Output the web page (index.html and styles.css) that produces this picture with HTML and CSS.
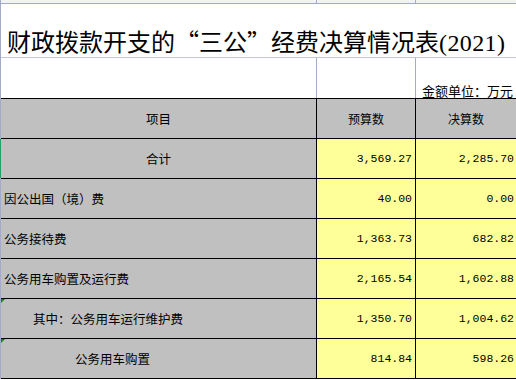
FILE: index.html
```html
<!DOCTYPE html>
<html lang="zh-CN">
<head>
<meta charset="utf-8">
<title>财政拨款开支的“三公”经费决算情况表(2021)</title>
<link rel="stylesheet" href="styles.css">
</head>
<body>
<div class="sheet">
  <div class="row top">
    <div class="c c1"></div><div class="c c2"></div><div class="c c3"></div>
  </div>
  <div class="row title">
    <div class="title-text">财政拨款开支的<span class="q ql">“</span>三公<span class="q">”</span>经费决算情况表<span class="yr">(2021)</span></div>
  </div>
  <div class="row unit">
    <div class="c c1"></div><div class="c c2"></div><div class="c c3 unit-text">金额单位：万元</div>
  </div>
  <div class="table">
    <div class="tr head">
      <div class="td name center">项目</div>
      <div class="td center">预算数</div>
      <div class="td center">决算数</div>
    </div>
    <div class="tr">
      <div class="td name center sel">合计</div>
      <div class="td num">3,569.27</div>
      <div class="td num">2,285.70</div>
    </div>
    <div class="tr">
      <div class="td name">因公出国（境）费</div>
      <div class="td num">40.00</div>
      <div class="td num">0.00</div>
    </div>
    <div class="tr">
      <div class="td name">公务接待费</div>
      <div class="td num">1,363.73</div>
      <div class="td num">682.82</div>
    </div>
    <div class="tr">
      <div class="td name">公务用车购置及运行费</div>
      <div class="td num">2,165.54</div>
      <div class="td num">1,602.88</div>
    </div>
    <div class="tr">
      <div class="td name ind1 flag">其中：公务用车运行维护费</div>
      <div class="td num">1,350.70</div>
      <div class="td num">1,004.62</div>
    </div>
    <div class="tr">
      <div class="td name ind2 flag">公务用车购置</div>
      <div class="td num">814.84</div>
      <div class="td num">598.26</div>
    </div>
  </div>
</div>
</body>
</html>
```

FILE: styles.css
```css
html, body {
  margin: 0;
  padding: 0;
  background: #ffffff;
}
body {
  width: 516px;
  height: 380px;
  overflow: hidden;
  font-family: "Noto Sans CJK SC", sans-serif;
  color: #000;
}
.sheet {
  border-left: 1px solid #a4abc9;
  width: 516px;
  box-sizing: border-box;
}
.row {
  display: grid;
  grid-template-columns: 316px 99px 100px;
}
.c {
  border-right: 1px solid #a4abc9;
  box-sizing: border-box;
}
.c3 {
  border-right: none;
}
.top {
  height: 4px;
  background: #f2f3f6;
  border-bottom: 1px solid #a4abc9;
  box-sizing: border-box;
}
.title {
  display: flex;
  align-items: flex-end;
  height: 54px;
  box-sizing: border-box;
  border-bottom: 1px solid #c3c7d6;
  padding: 0 0 1px 6px;
}
.title-text {
  font-family: "Noto Sans CJK SC", sans-serif;
  font-size: 24px;
  line-height: 26px;
  white-space: nowrap;
}
.title-text .q {
  display: inline-block;
  width: 24px;
}
.title-text .ql {
  text-align: right;
}
.title-text .yr {
  font-family: "Liberation Serif", serif;
  letter-spacing: 0.4px;
}
.unit {
  height: 40px;
}
.unit-text {
  display: flex;
  align-items: flex-end;
  justify-content: flex-end;
  padding-right: 3px;
  font-size: 13px;
  line-height: 15px;
  white-space: nowrap;
}
.table {
  border-top: 1px solid #000;
}
.tr {
  display: grid;
  grid-template-columns: 316px 99px 100px;
  height: 40px;
  box-sizing: border-box;
  border-bottom: 1px solid #000;
  background: #ffff99;
}
.td {
  border-right: 1px solid #000;
  box-sizing: border-box;
  display: flex;
  align-items: center;
  font-size: 12px;
  white-space: nowrap;
  position: relative;
}
.td:nth-child(3) {
  border-right: none;
}
.head .td {
  background: #c0c0c0;
}
.name {
  background: #c0c0c0;
  padding-left: 3px;
  font-size: 12.5px;
}
.center {
  justify-content: center;
  padding-left: 0;
}
.num {
  justify-content: flex-end;
  padding-right: 3px;
  font-family: "Liberation Mono", monospace;
  font-size: 11.5px;
}
.td.num:nth-child(3) {
  padding-right: 2px;
}
.sel::after {
  content: "";
  position: absolute;
  left: -1px;
  top: 0;
  bottom: 0;
  width: 1px;
  background: #21a366;
}
.ind1 {
  padding-left: 32px;
}
.ind2 {
  padding-left: 74px;
}
.flag::before {
  content: "";
  position: absolute;
  left: 0;
  top: 0;
  width: 0;
  height: 0;
  border-top: 4px solid #1e7e22;
  border-right: 4px solid transparent;
}
```
